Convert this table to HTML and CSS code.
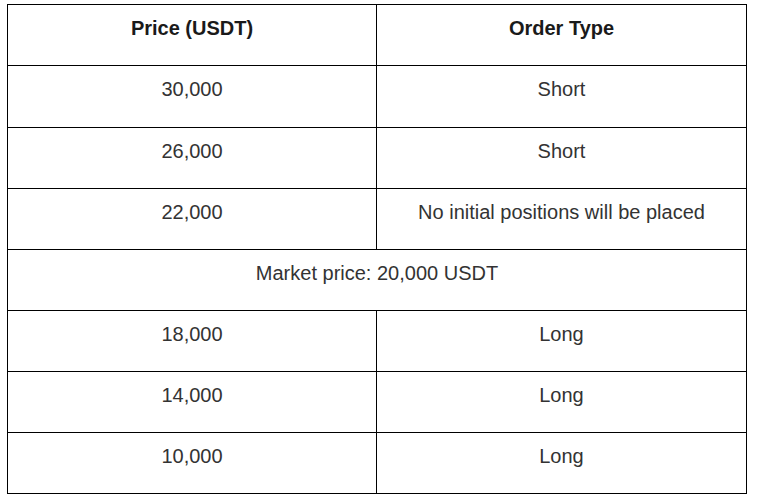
FILE: index.html
```html
<!DOCTYPE html>
<html>
<head>
<meta charset="utf-8">
<link rel="stylesheet" href="styles.css">
</head>
<body>
<table class="grid">
  <colgroup><col class="c1"><col class="c2"></colgroup>
  <thead>
    <tr><th>Price (USDT)</th><th>Order Type</th></tr>
  </thead>
  <tbody>
    <tr class="tall"><td>30,000</td><td>Short</td></tr>
    <tr><td>26,000</td><td>Short</td></tr>
    <tr><td>22,000</td><td>No initial positions will be placed</td></tr>
    <tr><td colspan="2">Market price: 20,000 USDT</td></tr>
    <tr><td>18,000</td><td>Long</td></tr>
    <tr><td>14,000</td><td>Long</td></tr>
    <tr><td>10,000</td><td>Long</td></tr>
  </tbody>
</table>
</body>
</html>
```
FILE: styles.css
```css
html, body {
  background: #fff;
}
body {
  margin: 4px 0 0 7px;
  font-family: "Liberation Sans", Arial, sans-serif;
  font-size: 20px;
}
.grid {
  border-collapse: collapse;
  width: 740px;
  table-layout: fixed;
}
.grid .c1 {
  width: 369px;
}
.grid th, .grid td {
  border: 1px solid #000;
  text-align: center;
  vertical-align: top;
  padding: 8px 10px 22px;
  line-height: 30px;
  height: 30px;
}
.grid .tall td {
  padding-bottom: 23px;
}
.grid th {
  font-weight: bold;
  color: #1a1a1a;
}
.grid td {
  color: #333;
}
```
